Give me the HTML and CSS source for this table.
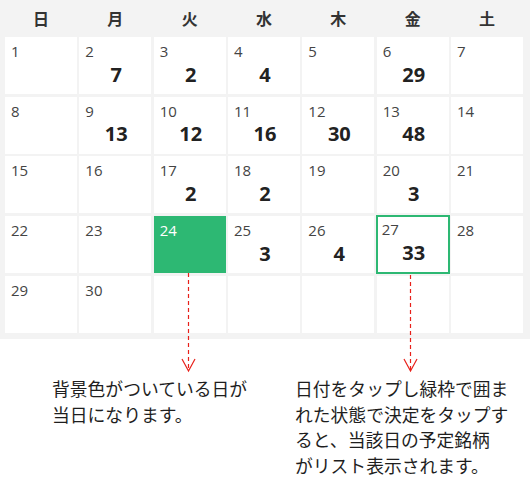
FILE: index.html
```html
<!DOCTYPE html>
<html lang="ja">
<head>
<meta charset="utf-8">
<link rel="stylesheet" href="styles.css">
</head>
<body>
<div class="page">
  <div class="calendar">
    <div class="weekdays">
      <div class="wd">日</div><div class="wd">月</div><div class="wd">火</div><div class="wd">水</div><div class="wd">木</div><div class="wd">金</div><div class="wd">土</div>
    </div>
    <div class="grid">
      <div class="cell"><span class="day">1</span></div>
      <div class="cell"><span class="day">2</span><span class="count">7</span></div>
      <div class="cell"><span class="day">3</span><span class="count">2</span></div>
      <div class="cell"><span class="day">4</span><span class="count">4</span></div>
      <div class="cell"><span class="day">5</span></div>
      <div class="cell"><span class="day">6</span><span class="count">29</span></div>
      <div class="cell"><span class="day">7</span></div>

      <div class="cell"><span class="day">8</span></div>
      <div class="cell"><span class="day">9</span><span class="count">13</span></div>
      <div class="cell"><span class="day">10</span><span class="count">12</span></div>
      <div class="cell"><span class="day">11</span><span class="count">16</span></div>
      <div class="cell"><span class="day">12</span><span class="count">30</span></div>
      <div class="cell"><span class="day">13</span><span class="count">48</span></div>
      <div class="cell"><span class="day">14</span></div>

      <div class="cell"><span class="day">15</span></div>
      <div class="cell"><span class="day">16</span></div>
      <div class="cell"><span class="day">17</span><span class="count">2</span></div>
      <div class="cell"><span class="day">18</span><span class="count">2</span></div>
      <div class="cell"><span class="day">19</span></div>
      <div class="cell"><span class="day">20</span><span class="count">3</span></div>
      <div class="cell"><span class="day">21</span></div>

      <div class="cell"><span class="day">22</span></div>
      <div class="cell"><span class="day">23</span></div>
      <div class="cell today"><span class="day">24</span></div>
      <div class="cell"><span class="day">25</span><span class="count">3</span></div>
      <div class="cell"><span class="day">26</span><span class="count">4</span></div>
      <div class="cell selected"><span class="day">27</span><span class="count">33</span></div>
      <div class="cell"><span class="day">28</span></div>

      <div class="cell"><span class="day">29</span></div>
      <div class="cell"><span class="day">30</span></div>
      <div class="cell"></div>
      <div class="cell"></div>
      <div class="cell"></div>
      <div class="cell"></div>
      <div class="cell"></div>
    </div>
  </div>

  <div class="notes">
    <p class="note note-left">背景色がついている日が<br>当日になります。</p>
    <p class="note note-right">日付をタップし緑枠で囲ま<br>れた状態で決定をタップす<br>ると、当該日の予定銘柄<br>がリスト表示されます。</p>
  </div>

  <svg class="arrows" width="530" height="491" viewBox="0 0 530 491">
    <g stroke="#e8201a" stroke-width="1.2" fill="none">
      <line x1="188.5" y1="273" x2="188.5" y2="371" stroke-dasharray="4 3"/>
      <polyline points="182,359 188.5,371 195,359"/>
      <line x1="410.5" y1="275" x2="410.5" y2="371" stroke-dasharray="4 3"/>
      <polyline points="404,359 410.5,371 417,359"/>
    </g>
  </svg>
</div>
</body>
</html>
```

FILE: styles.css
```css
html, body {
  margin: 0;
  padding: 0;
  background: #ffffff;
}

.page {
  position: relative;
  width: 530px;
  height: 491px;
  overflow: hidden;
}

.calendar {
  background: #f3f3f3;
  padding: 0 7px 6.5px 5px;
}

.weekdays {
  display: grid;
  grid-template-columns: repeat(7, 1fr);
  column-gap: 2.4px;
  height: 37px;
  align-items: center;
}

.wd {
  text-align: center;
  font-family: "Noto Sans CJK JP", sans-serif;
  font-weight: 700;
  font-size: 16px;
  color: #333333;
  padding-bottom: 1px;
}

.grid {
  display: grid;
  grid-template-columns: repeat(7, 1fr);
  grid-auto-rows: 57px;
  column-gap: 2.4px;
  row-gap: 2.7px;
}

.cell {
  background: #ffffff;
  display: flex;
  flex-direction: column;
  padding: 4px 6px 0 6px;
  font-family: "Open Sans", sans-serif;
}

.day {
  font-size: 15px;
  line-height: 20px;
  color: #444444;
}

.count {
  margin-top: 1.5px;
  text-align: center;
  font-size: 20px;
  line-height: 24px;
  font-weight: 700;
  color: #222222;
  padding-left: 2px;
}

.cell.today {
  background: #2db873;
}

.cell.today .day {
  color: #ffffff;
}

.cell.selected {
  margin: -1px;
  border: 2px solid #2db873;
  padding: 2px 4px 0 4px;
}

.notes {
  display: flex;
  padding: 37px 0 0 52px;
}

.note {
  margin: 0;
  font-family: "Noto Sans CJK JP", sans-serif;
  font-size: 17.8px;
  line-height: 25.6px;
  color: #1e1e1e;
}

.note-left {
  width: 243px;
}

.note-right {
  width: 235px;
}

.arrows {
  position: absolute;
  left: 0;
  top: 0;
  pointer-events: none;
}
```
